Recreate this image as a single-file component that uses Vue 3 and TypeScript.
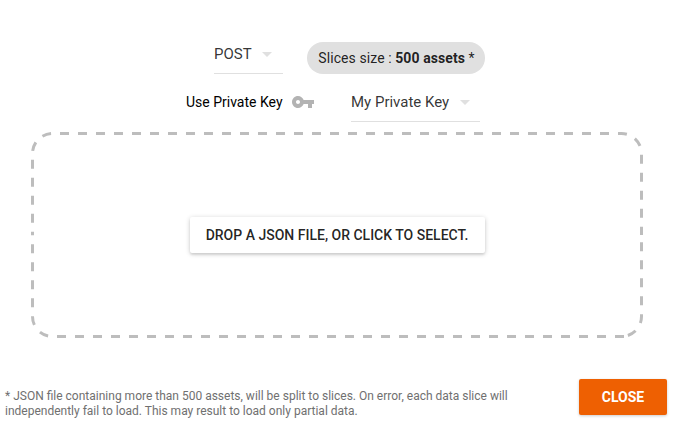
<script setup lang="ts">
const note: string = '* JSON file containing more than 500 assets, will be split to slices. On error, each data slice will independently fail to load. This may result to load only partial data.'
</script>

<template>
  <div class="dialog">
    <div class="row first">
      <div class="select post">
        <span class="value">POST</span>
        <span class="arrow"></span>
      </div>
      <div class="chip">Slices size : <b>500 assets</b> *</div>
    </div>
    <div class="row second">
      <span class="label">Use Private Key</span>
      <svg class="key" width="24" height="24" viewBox="0 0 24 24" aria-hidden="true">
        <path fill="#b3b3b3" d="M12.65 10C11.83 7.67 9.61 6 7 6c-3.31 0-6 2.69-6 6s2.69 6 6 6c2.61 0 4.83-1.67 5.65-4H17v4h4v-4h2v-4H12.65zM7 14c-1.1 0-2-.9-2-2s.9-2 2-2 2 .9 2 2-.9 2-2 2z"/>
      </svg>
      <div class="select key-select">
        <span class="value">My Private Key</span>
        <span class="arrow"></span>
      </div>
    </div>
    <div class="drop">
      <svg class="dash" width="612" height="206" viewBox="0 0 612 206" aria-hidden="true">
        <path class="line" d="M29 1.5H590.5A20 20 0 0 1 610.5 21.5V103" />
        <path class="line gap" d="M29 1.5H21.5A20 20 0 0 0 1.5 21.5V103" />
        <path class="line" d="M593 204.5H21.5A20 20 0 0 1 1.5 184.5V103" />
        <path class="line gap" d="M593 204.5H590.5A20 20 0 0 0 610.5 184.5V103" />
      </svg>
      <button class="drop-btn" type="button">DROP A JSON FILE, OR CLICK TO SELECT.</button>
    </div>
    <div class="footer">
      <p class="note">{{ note }}</p>
      <button class="close" type="button">CLOSE</button>
    </div>
  </div>
</template>

<style>
html, body { margin: 0; background: #fff; }
</style>

<style scoped>
.dialog {
  width: 674px;
  height: 422px;
  box-sizing: border-box;
  padding-top: 42px;
  font-family: Roboto, "Liberation Sans", sans-serif;
  color: rgba(0, 0, 0, 0.87);
  overflow: hidden;
}
.row { display: flex; align-items: flex-start; }
.first { height: 32px; padding-left: 214px; }
.second { height: 32px; margin-top: 16px; padding-left: 186px; }
.select {
  position: relative;
  box-sizing: border-box;
  height: 32px;
  border-bottom: 1px solid #e0e0e0;
  font-size: 15px;
  line-height: 24px;
  color: rgba(0, 0, 0, 0.8);
}
.post { width: 69px; margin-right: 24px; }
.post .value { line-height: 22px; }
.key-select { width: 129px; margin-left: 36px; }
.arrow {
  position: absolute;
  top: 10px;
  width: 0;
  height: 0;
  border-left: 5px solid transparent;
  border-right: 5px solid transparent;
  border-top: 5px solid #e0e0e0;
}
.post .arrow { left: 48px; }
.key-select .arrow { left: 109px; }
.chip {
  box-sizing: border-box;
  width: 178px;
  height: 32px;
  padding-left: 1px;
  border-radius: 16px;
  background: #e0e0e0;
  font-size: 14px;
  line-height: 32px;
  text-align: center;
  white-space: nowrap;
  letter-spacing: 0.08px;
}
.chip b { font-weight: 700; }
.label {
  width: 97px;
  font-size: 14px;
  line-height: 24px;
  color: #000;
  white-space: nowrap;
}
.key { margin: 0 0 0 8px; flex: none; }
.drop {
  position: relative;
  box-sizing: border-box;
  width: 612px;
  height: 206px;
  margin: 10px 0 0 31px;
  display: flex;
  align-items: center;
  justify-content: center;
}
.dash { position: absolute; top: 0; left: 0; }
.line {
  fill: none;
  stroke: #bdbdbd;
  stroke-width: 3;
  stroke-dasharray: 9 9;
}
.gap { stroke-dashoffset: 9; }
.drop-btn {
  position: relative;
  width: 295px;
  height: 36px;
  padding: 0;
  border: 0;
  border-radius: 2px;
  background: #fff;
  box-shadow: 0 1px 5px rgba(0, 0, 0, 0.2), 0 2px 2px rgba(0, 0, 0, 0.08);
  font-family: inherit;
  font-size: 14px;
  font-weight: 500;
  line-height: 36px;
  color: rgba(0, 0, 0, 0.87);
  white-space: nowrap;
}
.footer {
  display: flex;
  align-items: flex-start;
  justify-content: space-between;
  margin-top: 41px;
  padding: 0 7px 0 5px;
}
.note {
  width: 540px;
  margin: 10px 0 0;
  font-size: 12px;
  line-height: 15px;
  color: #707070;
}
.close {
  width: 88px;
  height: 36px;
  padding: 0;
  border: 0;
  border-radius: 2px;
  background: #ee6002;
  box-shadow: 0 1px 3px rgba(0, 0, 0, 0.2);
  color: #fff;
  font-family: inherit;
  font-size: 14px;
  font-weight: 700;
}
</style>
